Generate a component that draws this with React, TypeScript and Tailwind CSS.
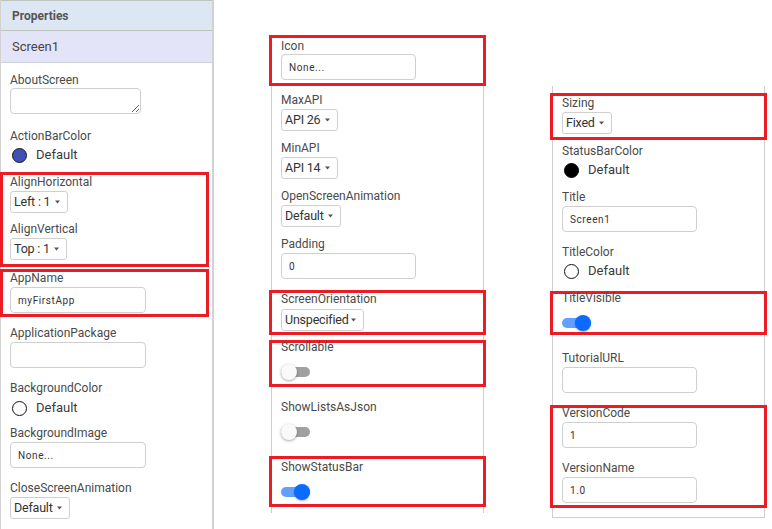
import React from 'react';

function Label({ text, className = "" }: { text: string; className?: string }) {
  return <div className={`h-4 leading-[17px] text-[12px] text-[#4a4a4a] whitespace-nowrap ${className}`}>{text}</div>;
}

function TextBox({ value = "", w, className = "" }: { value?: string; w: string; className?: string }) {
  return (
    <div className={`h-[26px] ${w} border border-[#cfcfcf] rounded-[4px] bg-white flex items-center pl-[7px] text-[10px] tracking-[0.6px] text-[#333] ${className}`}>
      {value}
    </div>
  );
}

function Select({ value, w, className = "" }: { value: string; w: string; className?: string }) {
  return (
    <div className={`h-[22px] ${w} border border-[#cfcfcf] rounded-[3px] bg-white flex items-center justify-between pl-[3px] pr-[7px] text-[12.5px] tracking-[-0.2px] text-[#333] ${className}`}>
      <span className="leading-none whitespace-nowrap">{value}</span>
      <svg width="5" height="4" viewBox="0 0 5 4" className="shrink-0"><path d="M0 0.5h5L2.5 3.5z" fill="#555" /></svg>
    </div>
  );
}

function ColorPick({ color, className = "" }: { color: "blue" | "black" | "none"; className?: string }) {
  const dot =
    color === "blue" ? "bg-[#3f51b5] border-[#1a1a1a]" : color === "black" ? "bg-black border-black" : "bg-white border-[#111]";
  return (
    <div className={`h-4 flex items-center ${className}`}>
      <span className={`w-[15px] h-[15px] rounded-full border-[1.5px] ml-[2px] ${dot}`} />
      <span className="ml-[9px] text-[13px] text-[#3a3a3a] leading-4">Default</span>
    </div>
  );
}

function Switch({ on, className = "" }: { on?: boolean; className?: string }) {
  return (
    <div className={`relative w-[29px] h-4 ${className}`}>
      <div className={`absolute left-0 right-0 top-[3px] h-[10px] rounded-full ${on ? "bg-[#62a0ff]" : "bg-[#a0a0a0]"}`} />
      {on ? (
        <div className="absolute right-0 top-0 w-4 h-4 rounded-full bg-[#0a6cff] shadow-[0_1px_2px_rgba(0,0,0,0.3)]" />
      ) : (
        <div className="absolute left-0 top-0 w-4 h-4 rounded-full bg-[#fafafa] shadow-[0_1px_3px_rgba(0,0,0,0.35)]" />
      )}
    </div>
  );
}

function Red({ children, className = "" }: { children: React.ReactNode; className?: string }) {
  return <div className={`border-[3px] border-[#ed1c24] ${className}`}>{children}</div>;
}

export default function App() {
  return (
    <div className="flex items-start h-[529px] w-[772px] bg-white overflow-hidden font-[Roboto,sans-serif]">
      {/* Properties column */}
      <div className="w-[214px] h-[529px] shrink-0 border-l border-r-2 border-[#d2d2d2] flex flex-col">
        <div className="h-[31px] border-t border-b border-[#bcc4bd] bg-[#dde7f3] flex items-center pl-[11px] text-[12px] font-bold text-[#555]">
          Properties
        </div>
        <div className="h-[32px] border-b border-[#cfd3dc] bg-[#e4e4f9] flex items-center pl-[11px] text-[13px] text-[#444]">
          Screen1
        </div>

        <div className="pl-[9px]">
          <Label text="AboutScreen" className="mt-[9px]" />
          <textarea className="block h-[26px] w-[131px] border border-[#cfcfcf] rounded-[4px] resize-y" />
          <Label text="ActionBarColor" className="mt-[14px]" />
          <ColorPick color="blue" className="mt-[3px]" />
        </div>

        <Red className="-ml-px w-[209px] mt-[9px] pl-[7px] pb-[4px]">
          <Label text="AlignHorizontal" className="-mt-px" />
          <Select value="Left : 1" w="w-[58px]" className="mt-px" />
          <Label text="AlignVertical" className="mt-[8px]" />
          <Select value="Top : 1" w="w-[57px]" className="mt-px" />
        </Red>
        <Red className="-ml-px w-[209px] mt-[2px] pl-[7px] pb-px">
          <Label text="AppName" className="-mt-[2px]" />
          <TextBox value="myFirstApp" w="w-[136px]" className="mt-px" />
        </Red>

        <div className="pl-[9px]">
          <Label text="ApplicationPackage" className="mt-[8px]" />
          <TextBox w="w-[136px]" className="mt-px" />
          <Label text="BackgroundColor" className="mt-[12px]" />
          <ColorPick color="none" className="mt-[4px]" />
          <Label text="BackgroundImage" className="mt-[9px]" />
          <TextBox value="None..." w="w-[136px]" className="mt-px" />
          <Label text="CloseScreenAnimation" className="mt-[12px]" />
          <Select value="Default" w="w-[60px]" className="mt-px" />
        </div>
      </div>

      {/* Middle column */}
      <div className="ml-[57px] mt-[35px] w-[213px] h-[478px] shrink-0 border-x border-[#cfcfcf] flex flex-col">
        <Red className="-mx-[3px] pl-[9px] pb-[3px]">
          <Label text="Icon" />
          <TextBox value="None..." w="w-[135px]" />
        </Red>
        <div className="pl-[9px]">
          <Label text="MaxAPI" className="mt-[6px]" />
          <Select value="API 26" w="w-[57px]" className="mt-px" />
          <Label text="MinAPI" className="mt-[9px]" />
          <Select value="API 14" w="w-[57px]" className="mt-px" />
          <Label text="OpenScreenAnimation" className="mt-[9px]" />
          <Select value="Default" w="w-[60px]" className="mt-px" />
          <Label text="Padding" className="mt-[9px]" />
          <TextBox value="0" w="w-[135px]" className="mt-px" />
        </div>
        <Red className="-mx-[3px] mt-[11px] pl-[9px] pb-px">
          <Label text="ScreenOrientation" className="-mt-[2px]" />
          <Select value="Unspecified" w="w-[83px]" className="mt-[2px]" />
        </Red>
        <Red className="-mx-[3px] mt-[5px] pl-[9px] pb-[4px]">
          <Label text="Scrollable" className="-mt-[4px]" />
          <Switch className="mt-[9px]" />
        </Red>
        <div className="pl-[9px]">
          <Label text="ShowListsAsJson" className="mt-[12px]" />
          <Switch className="mt-[9px]" />
        </div>
        <Red className="-mx-[3px] mt-[16px] pl-[9px] pb-[4px]">
          <Label text="ShowStatusBar" />
          <Switch on className="mt-[9px]" />
        </Red>
      </div>

      {/* Right column */}
      <div className="ml-[68px] mt-[86px] w-[213px] h-[432px] shrink-0 border-x border-b border-[#cfcfcf] flex flex-col">
        <Red className="-mx-[3px] mt-[7px] pl-[9px] pb-[3px]">
          <Label text="Sizing" className="-mt-px" />
          <Select value="Fixed" w="w-[50px]" className="mt-px" />
        </Red>
        <div className="pl-[9px]">
          <Label text="StatusBarColor" className="mt-[3px]" />
          <ColorPick color="black" className="mt-[3px]" />
          <Label text="Title" className="mt-[11px]" />
          <TextBox value="Screen1" w="w-[135px]" className="mt-px" />
          <Label text="TitleColor" className="mt-[12px]" />
          <ColorPick color="none" className="mt-[3px]" />
        </div>
        <Red className="-mx-[3px] mt-[12px] pl-[9px] pb-px">
          <Label text="TitleVisible" className="-mt-[4px]" />
          <Switch on className="mt-[9px]" />
        </Red>
        <div className="pl-[9px]">
          <Label text="TutorialURL" className="mt-[15px]" />
          <TextBox w="w-[135px]" className="mt-px" />
        </div>
        <Red className="-mx-[3px] mt-[12px] pl-[9px] pb-[2px]">
          <Label text="VersionCode" className="-mt-[3px]" />
          <TextBox value="1" w="w-[135px]" className="mt-px" />
          <Label text="VersionName" className="mt-[12px]" />
          <TextBox value="1.0" w="w-[135px]" className="mt-px" />
        </Red>
      </div>
    </div>
  );
}
